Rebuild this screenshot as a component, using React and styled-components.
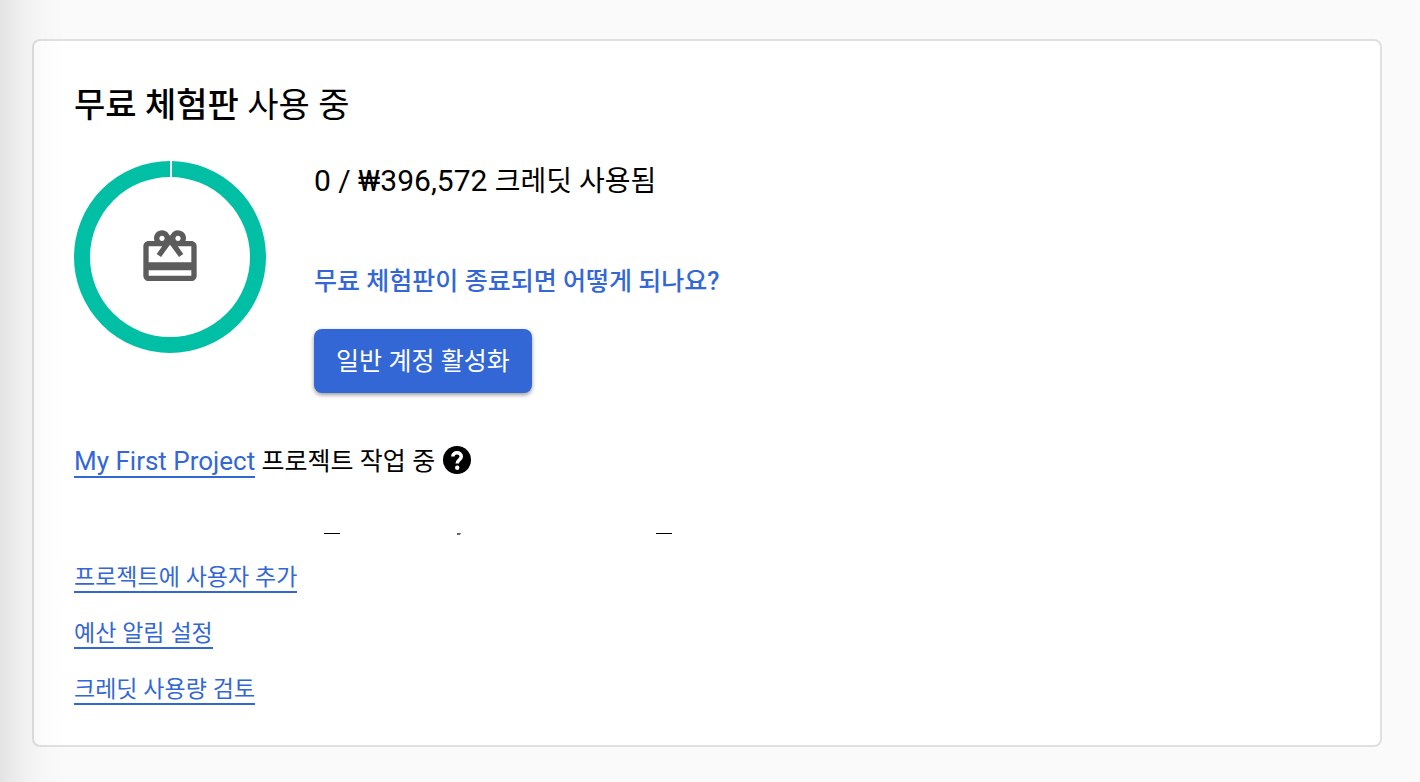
import React from "react";
import styled, { createGlobalStyle } from "styled-components";
import { MdCardGiftcard } from "react-icons/md";

const korean = `Lato, "Noto Sans CJK KR", sans-serif`;

const GlobalStyle = createGlobalStyle`
  *, *::before, *::after { box-sizing: border-box; }
  body {
    margin: 0;
    background: #fafafa;
    color: #000;
    font-family: Roboto, "Noto Sans CJK KR", sans-serif;
  }
`;

const Page = styled.main`
  min-height: 100vh;
  padding: 39px 38px 35px 32px;
`;

const EdgeShadow = styled.div`
  position: fixed;
  inset: 0 auto 0 0;
  width: 64px;
  pointer-events: none;
  background: linear-gradient(
    to right,
    rgba(0, 0, 0, 0.09) 0,
    rgba(0, 0, 0, 0.07) 8px,
    rgba(0, 0, 0, 0.03) 28px,
    rgba(0, 0, 0, 0.01) 44px,
    rgba(0, 0, 0, 0) 64px
  );
`;

const Card = styled.section`
  padding: 40px;
  border: 2px solid #e0e0e0;
  border-radius: 8px;
  background: #fff;
`;

const Title = styled.h1`
  margin: 0 0 32px;
  font-size: 34px;
  line-height: 48px;
  font-weight: 400;
`;

const Strong = styled.span`
  font-weight: 500;
`;

const Trial = styled.div`
  display: flex;
  align-items: flex-start;
  gap: 48px;
`;

const Gauge = styled.div`
  display: grid;
  flex: none;
  width: 192px;
  height: 192px;

  > * {
    grid-area: 1 / 1;
    place-self: center;
  }
`;

const TrialDetails = styled.div`
  display: flex;
  flex-direction: column;
  align-items: flex-start;
`;

const Credits = styled.p`
  margin: 0 0 62px;
  font-size: 28px;
  line-height: 42px;
`;

const Amount = styled.span`
  font-size: 30px;
  line-height: 1;
`;

const QuestionLink = styled.a`
  margin-bottom: 34px;
  color: #3367d6;
  font-family: ${korean};
  font-size: 25px;
  font-weight: 500;
  line-height: 30px;
  text-decoration: none;
`;

const QuestionMark = styled.span`
  font-family: Roboto, sans-serif;
  line-height: 1;
`;

const ActivateButton = styled.button`
  height: 64px;
  padding: 0 22px 2px;
  border: 0;
  border-radius: 8px;
  background: #3367d6;
  box-shadow: 0 2px 4px rgba(0, 0, 0, 0.4);
  color: #fff;
  font: 400 25px/32px ${korean};
  cursor: pointer;
`;

const ProjectRow = styled.div`
  display: flex;
  align-items: center;
  gap: 8px;
  margin-top: 48px;
  font-size: 25px;
  line-height: 42px;
`;

const ProjectLink = styled.a`
  border-bottom: 2px solid #3367d6;
  color: #3367d6;
  font-size: 26px;
  line-height: 1;
  text-decoration: none;
`;

const ProjectStatus = styled.span`
  font-family: ${korean};
  line-height: 1;
`;

const HelpButton = styled.button`
  display: grid;
  padding: 0 0 4px;
  border: 0;
  background: none;
  cursor: pointer;
`;

const ClippedLine = styled.svg`
  display: block;
  margin: 49px 0 24px 240px;
`;

const LinkList = styled.ul`
  display: flex;
  flex-direction: column;
  align-items: flex-start;
  gap: 22px;
  margin: 0;
  padding: 0;
  list-style: none;
`;

const ListLink = styled.a`
  display: block;
  padding-top: 2px;
  border-bottom: 2px solid #3367d6;
  color: #3367d6;
  font-family: ${korean};
  font-size: 23px;
  line-height: 30px;
  text-decoration: none;
`;

const links = ["프로젝트에 사용자 추가", "예산 알림 설정", "크레딧 사용량 검토"];

export default function App() {
  return (
    <>
      <GlobalStyle />
      <Page lang="ko">
        <Card>
          <Title>
            <Strong>무료 체험판</Strong> 사용 중
          </Title>
          <Trial>
            <Gauge>
              <svg width="192" height="192" viewBox="0 0 192 192" aria-hidden="true">
                <circle cx="96" cy="96" r="88" fill="none" stroke="#00bfa5" strokeWidth="16" />
                <path d="M97 0v17" stroke="#fff" strokeWidth="2" />
              </svg>
              <MdCardGiftcard size={64} color="#5c5c5c" aria-hidden="true" />
            </Gauge>
            <TrialDetails>
              <Credits>
                <Amount>0 / ₩396,572 </Amount>크레딧 사용됨
              </Credits>
              <QuestionLink href="#trial-end">
                무료 체험판이 종료되면 어떻게 되나요<QuestionMark>?</QuestionMark>
              </QuestionLink>
              <ActivateButton type="button">일반 계정 활성화</ActivateButton>
            </TrialDetails>
          </Trial>
          <ProjectRow>
            <span>
              <ProjectLink href="#project">My First Project</ProjectLink>{" "}
              <ProjectStatus>프로젝트 작업 중</ProjectStatus>
            </span>
            <HelpButton type="button" aria-label="도움말">
              <svg width="28" height="28" viewBox="0 0 28 28" aria-hidden="true">
                <circle cx="14" cy="14" r="14" fill="#000" />
                <path
                  d="M9.8 10.6C9.8 8.2 11.6 6.8 14 6.8s4.3 1.4 4.3 3.7c0 3.2-4.1 3.3-4.1 7.1"
                  fill="none"
                  stroke="#fff"
                  strokeWidth="3.5"
                />
                <circle cx="14.2" cy="21.8" r="2.2" fill="#fff" />
              </svg>
            </HelpButton>
          </ProjectRow>
          <ClippedLine width="360" height="3" viewBox="0 0 360 3" aria-hidden="true">
            <path d="M10 1.5h16M342 1.5h16" stroke="#000" />
            <path d="M143 1h4l-1 2h-3z" fill="#666" />
          </ClippedLine>
          <LinkList>
            {links.map((label) => (
              <li key={label}>
                <ListLink href="#quick-link">{label}</ListLink>
              </li>
            ))}
          </LinkList>
        </Card>
        <EdgeShadow />
      </Page>
    </>
  );
}
